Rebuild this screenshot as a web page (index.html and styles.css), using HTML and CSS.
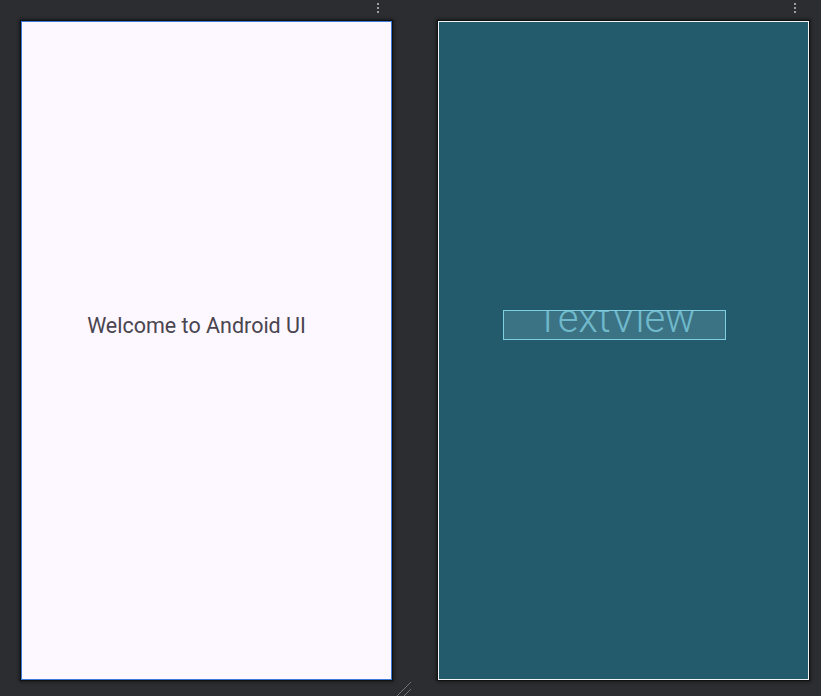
FILE: index.html
```html
<!DOCTYPE html>
<html>
<head>
<meta charset="utf-8">
<link rel="stylesheet" href="styles.css">
</head>
<body>
<div class="canvas">
  <div class="col">
    <div class="menu"><span></span><span></span><span></span></div>
    <div class="phone light">
      <div class="welcome">Welcome to Android UI</div>
    </div>
  </div>
  <div class="col">
    <div class="menu"><span></span><span></span><span></span></div>
    <div class="phone blueprint">
      <div class="tv"><span>TextView</span></div>
    </div>
  </div>
  <svg class="grip" width="16" height="16" viewBox="0 0 16 16">
    <line x1="1" y1="15" x2="15" y2="1" stroke="#6f7276" stroke-width="1"/>
    <line x1="8" y1="15" x2="15" y2="8" stroke="#6f7276" stroke-width="1"/>
  </svg>
</div>
</body>
</html>
```
FILE: styles.css
```css
html, body {
  margin: 0;
  padding: 0;
  background: #2b2d30;
  width: 821px;
  height: 696px;
  overflow: hidden;
}
.canvas {
  position: relative;
  display: flex;
  gap: 46px;
  padding: 0 0 0 21px;
  height: 696px;
}
.col {
  display: flex;
  flex-direction: column;
  width: 371px;
}
.menu {
  height: 21px;
  display: flex;
  flex-direction: column;
  align-items: flex-end;
  padding: 3px 13px 0 0;
  box-sizing: border-box;
  gap: 2px;
}
.menu span {
  width: 2px;
  height: 2px;
  background: #9a9da1;
}
.phone {
  height: 659px;
  box-sizing: border-box;
  box-shadow: 0 0 0 1px #101113, 0 0 3px 2px rgba(0,0,0,0.45);
  display: flex;
  align-items: center;
  justify-content: center;
}
.light {
  background: #fdf7ff;
  border: 1px solid #3b7ad9;
}
.welcome {
  font-family: Roboto, "Noto Sans", sans-serif;
  font-size: 21.5px;
  color: #49454f;
  margin-right: 20px;
  margin-bottom: 50px;
}
.blueprint {
  background: #235b6c;
  border: 1px solid #f2f4f5;
}
.tv {
  width: 223px;
  height: 30px;
  box-sizing: border-box;
  border: 1px solid #7fcfe3;
  background: #3b7284;
  overflow: hidden;
  display: flex;
  justify-content: center;
  align-items: flex-end;
  margin-right: 18px;
  margin-bottom: 52px;
}
.tv span {
  font-family: Roboto, "Noto Sans", sans-serif;
  font-weight: 300;
  font-size: 40px;
  line-height: 40px;
  color: #6fb9cb;
  margin-bottom: 0;
  margin-left: 2px;
  white-space: nowrap;
}
.grip {
  position: absolute;
  left: 396px;
  top: 681px;
}
```
